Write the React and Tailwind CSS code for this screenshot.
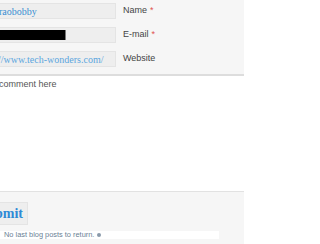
import React from "react";

const serif = { fontFamily: '"Liberation Serif", "Times New Roman", serif' };

function Row({ children, label, required }) {
  return (
    <div className="flex items-center h-[16px]">
      <div className="w-[116px] h-[16px] bg-[#eeeeee] border border-l-0 border-[#e4e4e4] flex items-center overflow-hidden">
        {children}
      </div>
      <div className="ml-[7px] text-[9px] text-[#444444] whitespace-nowrap" style={{ fontFamily: '"Liberation Sans", Arial, sans-serif' }}>
        {label}
        {required && <span className="text-[#e05050] ml-[3px]">*</span>}
      </div>
    </div>
  );
}

export default function App() {
  return (
    <div className="w-[244px] h-[244px] overflow-hidden bg-[#f6f6f6]" style={{ fontFamily: '"Liberation Sans", Arial, sans-serif' }}>
      <div className="pt-[3px] flex flex-col gap-[8px]">
        <Row label="Name" required>
          <span className="text-[10px] text-[#3b8fd2] leading-none -ml-[1px] mt-[1px]" style={serif}>raobobby</span>
        </Row>
        <Row label="E-mail" required>
          <div className="w-[66px] h-[10px] bg-black border-r border-[#777]" />
        </Row>
        <Row label="Website">
          <span className="text-[10px] text-[#5ba6de] leading-none -ml-[2px] mt-[1px] whitespace-nowrap" style={serif}>//www.tech-wonders.com/</span>
        </Row>
      </div>
      <div className="mt-[7px] h-[118px] bg-white border-t-2 border-b border-t-[#dddddd] border-b-[#e2e2e2]">
        <div className="text-[9px] text-[#555555] pt-[4px] -ml-[1px] leading-none">comment here</div>
      </div>
      <div className="mt-[10px] flex">
        <div className="h-[23px] w-[28px] bg-[#eeeeee] border border-l-0 border-[#e4e4e4] flex items-center justify-end pr-[4px] overflow-hidden">
          <span className="text-[14px] font-bold text-[#2f8ad6] whitespace-nowrap leading-none" style={serif}>Submit</span>
        </div>
      </div>
      <div className="mt-[6px] w-[219px] h-[8px] bg-white flex items-center pl-[4px]">
        <span className="text-[7.4px] text-[#6a7f95] leading-none whitespace-nowrap">No last blog posts to return.</span>
        <span className="ml-[3px] w-[4px] h-[4px] rounded-full bg-[#8a9aaa]" />
      </div>
    </div>
  );
}
